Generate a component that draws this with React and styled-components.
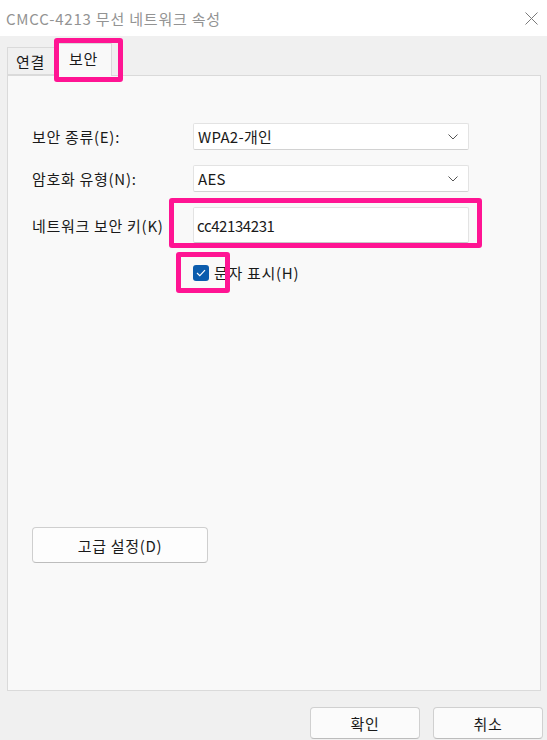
import React from "react";
import styled, { createGlobalStyle } from "styled-components";

const Global = createGlobalStyle`
  html, body { margin: 0; padding: 0; background: #f0f0f0; }
  body { font-family: "Noto Sans CJK KR", "Noto Sans", sans-serif; }
  * { box-sizing: border-box; }
`;

const Window = styled.div`
  position: relative;
  width: 547px;
  height: 740px;
  background: #f0f0f0;
  display: flex;
  flex-direction: column;
  overflow: hidden;
  color: #1a1a1a;
  font-size: 15px;
  letter-spacing: 0.7px;
`;

const TitleBar = styled.div`
  height: 36px;
  background: #ffffff;
  display: flex;
  align-items: center;
  justify-content: space-between;
  padding: 0 9px 0 6px;
  flex-shrink: 0;
`;

const Title = styled.div`
  color: #939393;
  font-size: 15px;
  line-height: 1;
  letter-spacing: 0.8px;
`;

const CloseBtn = styled.div`
  width: 14px;
  height: 14px;
  display: flex;
  align-items: center;
  justify-content: center;
`;

const Body = styled.div`
  display: flex;
  flex-direction: column;
  padding: 7px 6px 0 7px;
`;

const TabRow = styled.div`
  display: flex;
  align-items: flex-end;
  height: 32px;
  position: relative;
  z-index: 1;
`;

const Tab = styled.div`
  height: ${(p) => (p.$active ? "33px" : "28px")};
  padding: ${(p) => (p.$active ? "0 13px 4px 13px" : "0 9px 0 8px")};
  display: flex;
  align-items: center;
  background: ${(p) => (p.$active ? "#f9f9f9" : "#f0f0f0")};
  border: 1px solid #dadada;
  border-bottom: ${(p) => (p.$active ? "none" : "1px solid #dadada")};
  margin-bottom: ${(p) => (p.$active ? "-1px" : "0")};
  font-size: 15px;
  color: #1a1a1a;
`;

const Panel = styled.div`
  height: 616px;
  background: #f9f9f9;
  border: 1px solid #dadada;
  padding: 47px 24px 0 24px;
  display: flex;
  flex-direction: column;
`;

const Form = styled.div`
  display: grid;
  grid-template-columns: 161px 276px;
  row-gap: 15px;
  align-items: center;
`;

const Label = styled.div`
  font-size: 15px;
  line-height: 1;
  color: #1a1a1a;
`;

const Select = styled.div`
  height: 27px;
  background: #ffffff;
  border: 1px solid #e3e3e3;
  border-bottom-color: #d2d2d2;
  border-radius: 2px;
  display: flex;
  align-items: center;
  justify-content: space-between;
  padding: 0 10px 0 4px;
  font-size: 15px;
  letter-spacing: 0.3px;
`;

const TextInput = styled.div`
  height: 36px;
  background: #ffffff;
  border: 1px solid #e3e3e3;
  border-bottom: 1px solid #c8c8c8;
  border-radius: 2px;
  display: flex;
  align-items: center;
  padding: 0 3px;
  font-size: 15px;
  letter-spacing: -0.4px;
`;

const CheckRow = styled.div`
  grid-column: 2;
  display: flex;
  align-items: center;
  gap: 5px;
  margin-top: 4px;
  font-size: 15px;
`;

const Box = styled.div`
  width: 16px;
  height: 16px;
  border-radius: 3px;
  background: #0b5cad;
  display: flex;
  align-items: center;
  justify-content: center;
`;

const AdvancedButton = styled.div`
  margin-top: 244px;
  width: 176px;
  height: 36px;
  background: #fdfdfd;
  border: 1px solid #cfcfcf;
  border-bottom-color: #bdbdbd;
  border-radius: 4px;
  display: flex;
  align-items: center;
  justify-content: center;
  font-size: 15px;
`;

const Footer = styled.div`
  display: flex;
  justify-content: flex-end;
  gap: 13px;
  padding: 16px 4px 0 0;
`;

const FooterButton = styled.div`
  width: 110px;
  height: 32px;
  background: #fbfbfb;
  border: 1px solid #d0d0d0;
  border-bottom-color: #bcbcbc;
  border-radius: 4px;
  display: flex;
  align-items: center;
  justify-content: center;
  font-size: 15px;
`;

const Highlight = styled.div`
  position: absolute;
  left: ${(p) => p.$x}px;
  top: ${(p) => p.$y}px;
  width: ${(p) => p.$w}px;
  height: ${(p) => p.$h}px;
  border: 5px solid #ff1493;
  border-radius: 3px;
  pointer-events: none;
  z-index: 5;
`;

const Chevron = () => (
  <svg width="10" height="6" viewBox="0 0 10 6">
    <path d="M0.5 0.5 L5 5 L9.5 0.5" fill="none" stroke="#555" strokeWidth="1" />
  </svg>
);

export default function App() {
  return (
    <>
      <Global />
      <Window>
        <TitleBar>
          <Title>CMCC-4213 무선 네트워크 속성</Title>
          <CloseBtn>
            <svg width="13" height="13" viewBox="0 0 13 13">
              <path d="M0.5 0.5 L12.5 12.5 M12.5 0.5 L0.5 12.5" stroke="#7a7a7a" strokeWidth="1" />
            </svg>
          </CloseBtn>
        </TitleBar>
        <Body>
          <TabRow>
            <Tab>연결</Tab>
            <Tab $active>보안</Tab>
          </TabRow>
          <Panel>
            <Form>
              <Label>보안 종류(E):</Label>
              <Select>
                <span>WPA2-개인</span>
                <Chevron />
              </Select>
              <Label>암호화 유형(N):</Label>
              <Select>
                <span>AES</span>
                <Chevron />
              </Select>
              <Label>네트워크 보안 키(K)</Label>
              <TextInput>cc42134231</TextInput>
              <CheckRow>
                <Box>
                  <svg width="10" height="8" viewBox="0 0 10 8">
                    <path d="M1 4 L3.8 6.6 L9 1.2" fill="none" stroke="#fff" strokeWidth="1.2" />
                  </svg>
                </Box>
                <span>문자 표시(H)</span>
              </CheckRow>
            </Form>
            <AdvancedButton>고급 설정(D)</AdvancedButton>
          </Panel>
        </Body>
        <Footer>
          <FooterButton>확인</FooterButton>
          <FooterButton>취소</FooterButton>
        </Footer>
        <Highlight $x={54} $y={38} $w={69} $h={44} />
        <Highlight $x={169} $y={198} $w={313} $h={50} />
        <Highlight $x={176} $y={252} $w={54} $h={41} />
      </Window>
    </>
  );
}
